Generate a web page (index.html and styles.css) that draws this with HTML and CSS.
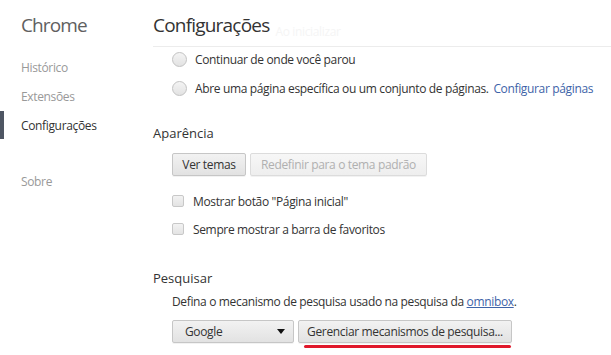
FILE: index.html
```html
<!DOCTYPE html>
<html lang="pt-BR">
<head>
    <meta charset="UTF-8">
    <title>Configurações</title>
    <link rel="stylesheet" href="styles.css">
</head>
<body>
    <nav class="sidebar">
        <h1 class="brand">Chrome</h1>
        <ul class="nav">
            <li>Histórico</li>
            <li>Extensões</li>
            <li class="active">Configurações</li>
            <li class="nav-gap">Sobre</li>
        </ul>
    </nav>

    <main class="main">
        <header class="page-header">
            <h1>Configurações</h1>
            <span class="ghost">Ao inicializar</span>
        </header>

        <section class="section startup">
            <label class="option">
                <span class="radio"></span>
                <span>Continuar de onde você parou</span>
            </label>
            <label class="option">
                <span class="radio"></span>
                <span>Abre uma página específica ou um conjunto de páginas. <a href="#" class="link">Configurar páginas</a></span>
            </label>
        </section>

        <section class="section">
            <h2>Aparência</h2>
            <div class="button-row">
                <button type="button" class="themes">Ver temas</button>
                <button type="button" class="reset" disabled>Redefinir para o tema padrão</button>
            </div>
            <label class="option check-option">
                <span class="checkbox"></span>
                <span>Mostrar botão "Página inicial"</span>
            </label>
            <label class="option check-option">
                <span class="checkbox"></span>
                <span>Sempre mostrar a barra de favoritos</span>
            </label>
        </section>

        <section class="section">
            <h2>Pesquisar</h2>
            <p class="desc">Defina o mecanismo de pesquisa usado na pesquisa da <a href="#" class="link underline">omnibox</a>.</p>
            <div class="button-row">
                <div class="select">
                    <span>Google</span>
                    <span class="caret"></span>
                </div>
                <button type="button" class="marked">Gerenciar mecanismos de pesquisa...</button>
            </div>
        </section>
    </main>
</body>
</html>
```

FILE: styles.css
```css
* {
    margin: 0;
    padding: 0;
    box-sizing: border-box;
}

body {
    font-family: 'Open Sans', 'Noto Sans', sans-serif;
    font-size: 12px;
    letter-spacing: -0.35px;
    color: #333;
    background: #fff;
    display: flex;
    height: 355px;
    overflow: hidden;
    white-space: nowrap;
}

/* Sidebar */
.sidebar {
    width: 153px;
    flex-shrink: 0;
}

.brand {
    font-size: 19px;
    font-weight: 400;
    letter-spacing: -0.9px;
    color: #606060;
    padding: 11px 0 0 21px;
    line-height: 28px;
}

.nav {
    list-style: none;
    margin-top: 14px;
}

.nav li {
    color: #999;
    line-height: 29px;
    padding-left: 21px;
    position: relative;
}

.nav li.active {
    color: #333;
}

.nav li.active::before {
    content: "";
    position: absolute;
    left: 0;
    top: 0;
    width: 4px;
    height: 28px;
    background: #4e5663;
}

.nav .nav-gap {
    margin-top: 27px;
}

/* Main */
.main {
    flex: 1;
}

.page-header {
    height: 47px;
    border-bottom: 1px solid #ececec;
    display: flex;
    align-items: baseline;
    padding-top: 11px;
}

.page-header h1 {
    font-size: 19px;
    font-weight: 400;
    letter-spacing: -0.8px;
    line-height: 28px;
    color: #333;
}

.ghost {
    color: #f5f5f5;
    margin-left: 6px;
    font-size: 12px;
    position: relative;
    top: 4px;
}

.section {
    padding-left: 19px;
}

.startup {
    margin-top: -2px;
    margin-bottom: 20px;
}

.section h2 {
    font-size: 13px;
    font-weight: 400;
    letter-spacing: 0;
    color: #333;
    margin-left: -19px;
    line-height: 20px;
    margin-bottom: 10px;
}

.option {
    display: flex;
    align-items: center;
    height: 29px;
    color: #333;
}

.radio {
    width: 15px;
    height: 15px;
    border-radius: 50%;
    border: 1px solid #c2c2c2;
    background: linear-gradient(#f4f4f4, #e2e2e2);
    margin-right: 8px;
    flex-shrink: 0;
}

.checkbox {
    width: 12px;
    height: 12px;
    border: 1px solid #c8c8c8;
    border-radius: 2px;
    background: linear-gradient(#f2f2f2, #e3e3e3);
    margin-right: 9px;
    flex-shrink: 0;
}

.check-option {
    height: 28px;
}

.check-option:first-of-type {
    margin-top: 11px;
}

.check-option:last-child {
    margin-bottom: 25px;
}

.link {
    color: #3e63a8;
    text-decoration: none;
    margin-left: 2px;
}

.underline {
    text-decoration: underline;
    margin-left: 0;
}

.button-row {
    display: flex;
    gap: 4px;
}

button,
.select {
    font-family: inherit;
    font-size: 12px;
    letter-spacing: -0.35px;
    color: #333;
    height: 23px;
    padding: 0 8px;
    border: 1px solid #c6c6c6;
    border-radius: 2px;
    background: linear-gradient(#f2f2f2, #e2e2e2);
    box-shadow: 0 1px 0 rgba(0, 0, 0, 0.05);
    white-space: nowrap;
}

.themes {
    width: 74px;
}

.reset {
    width: 177px;
}

button:disabled {
    color: #b0b0b0;
    border-color: #dcdcdc;
    background: linear-gradient(#f7f7f7, #eeeeee);
}

.desc {
    line-height: 20px;
    margin-top: -6px;
    margin-bottom: 8px;
}

.select {
    width: 122px;
    display: flex;
    align-items: center;
    justify-content: space-between;
    padding: 0 8px 0 12px;
}

.caret {
    width: 0;
    height: 0;
    border-left: 4px solid transparent;
    border-right: 4px solid transparent;
    border-top: 5px solid #111;
}

.marked {
    position: relative;
    width: 214px;
}

.marked::after {
    content: "";
    position: absolute;
    left: 5px;
    right: 0;
    bottom: -6px;
    height: 3px;
    border-radius: 2px;
    background: #e0182b;
}
```
